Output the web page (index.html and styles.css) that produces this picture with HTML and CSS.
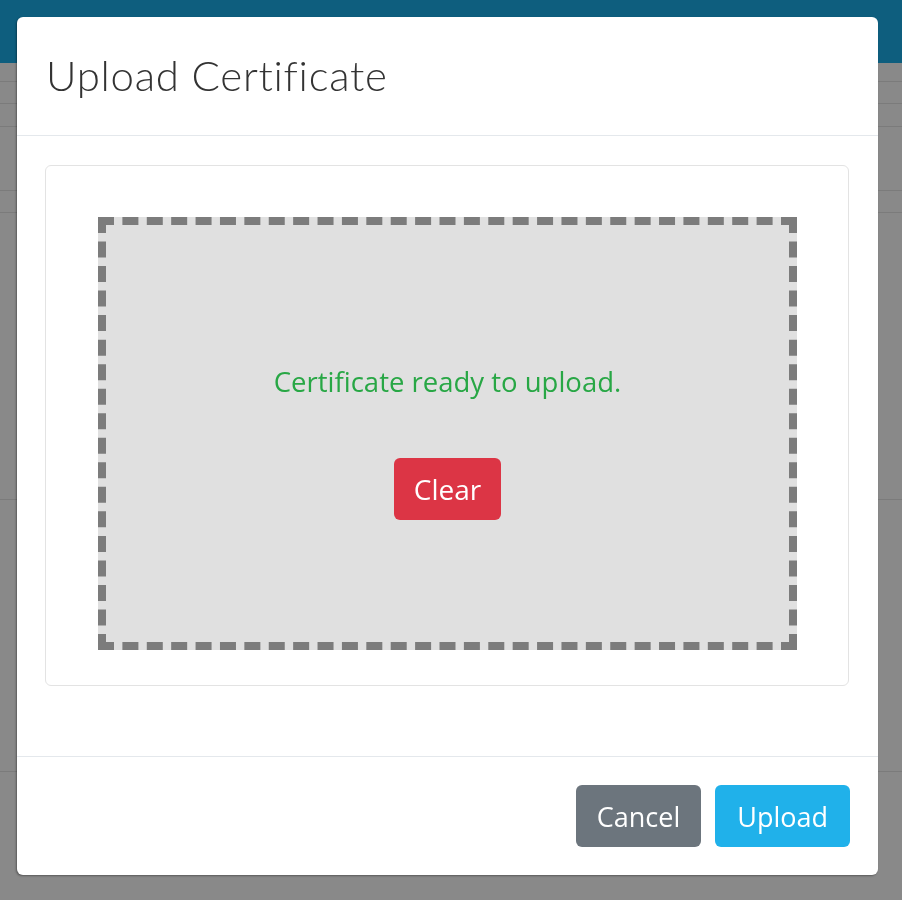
FILE: index.html
```html
<!DOCTYPE html>
<html lang="en">
<head>
    <meta charset="UTF-8">
    <meta name="viewport" content="width=device-width, initial-scale=1.0">
    <title>Upload Certificate</title>
    <link rel="stylesheet" href="styles.css">
</head>
<body>
    <div class="page">
        <div class="topbar"></div>
        <div class="row" style="height: 19px;"></div>
        <div class="row" style="height: 22px;"></div>
        <div class="row" style="height: 23px;"></div>
        <div class="row" style="height: 64px;"></div>
        <div class="row" style="height: 22px;"></div>
        <div class="row" style="height: 287px;"></div>
        <div class="row" style="height: 272px;"></div>
    </div>

    <div class="modal">
        <div class="modal-header">
            <h1 class="modal-title">Upload Certificate</h1>
        </div>
        <div class="modal-body">
            <div class="card">
                <div class="dropzone">
                    <p class="ready">Certificate ready to upload.</p>
                    <button class="btn btn-danger">Clear</button>
                </div>
            </div>
        </div>
        <div class="modal-footer">
            <button class="btn btn-secondary">Cancel</button>
            <button class="btn btn-info">Upload</button>
        </div>
    </div>
</body>
</html>
```

FILE: styles.css
```css
body {
    margin: 0;
    padding: 0;
    background-color: #898989;
    font-family: "Open Sans", sans-serif;
    overflow: hidden;
}
.topbar {
    height: 63px;
    background-color: #0e5e7e;
}
.row {
    border-bottom: 1px solid #7b7b7b;
    box-sizing: border-box;
}
.modal {
    position: fixed;
    top: 17px;
    left: 17px;
    width: 861px;
    background-color: white;
    border-radius: 6px;
    box-shadow: -1px 1px 2px rgba(0, 0, 0, 0.35);
}
.modal-header {
    height: 118px;
    padding: 0 29px;
    border-bottom: 1px solid #e4e8ec;
    display: flex;
    align-items: center;
}
.modal-title {
    margin: 0 0 2px;
    font-family: "Lato", sans-serif;
    font-weight: 300;
    font-size: 42px;
    letter-spacing: 0.7px;
    color: #333;
}
.modal-body {
    padding: 29px 29px 70px 28px;
}
.card {
    border: 1px solid #e3e3e3;
    border-radius: 6px;
    padding: 51px 51px 35px 52px;
}
.dropzone {
    box-sizing: border-box;
    height: 433px;
    padding-top: 138px;
    border: 8px dashed #7c7c7c;
    background-color: #e0e0e0;
    display: flex;
    flex-direction: column;
    align-items: center;
}
.ready {
    margin: 0 0 58px;
    color: #28a745;
    font-size: 27.5px;
}
.btn {
    font-family: "Open Sans", sans-serif;
    font-size: 27px;
    color: white;
    border: none;
    border-radius: 6px;
    height: 62px;
    padding: 0 21px;
    cursor: pointer;
}
.btn-danger {
    font-size: 28px;
    padding: 0 20px;
    background-color: #dc3545;
}
.btn-secondary {
    background-color: #6c757d;
}
.btn-info {
    padding: 0 22px;
    background-color: #20b1ea;
}
.modal-footer {
    border-top: 1px solid #e4e8ec;
    padding: 28px 28px 28px;
    display: flex;
    justify-content: flex-end;
    gap: 14px;
}
```
